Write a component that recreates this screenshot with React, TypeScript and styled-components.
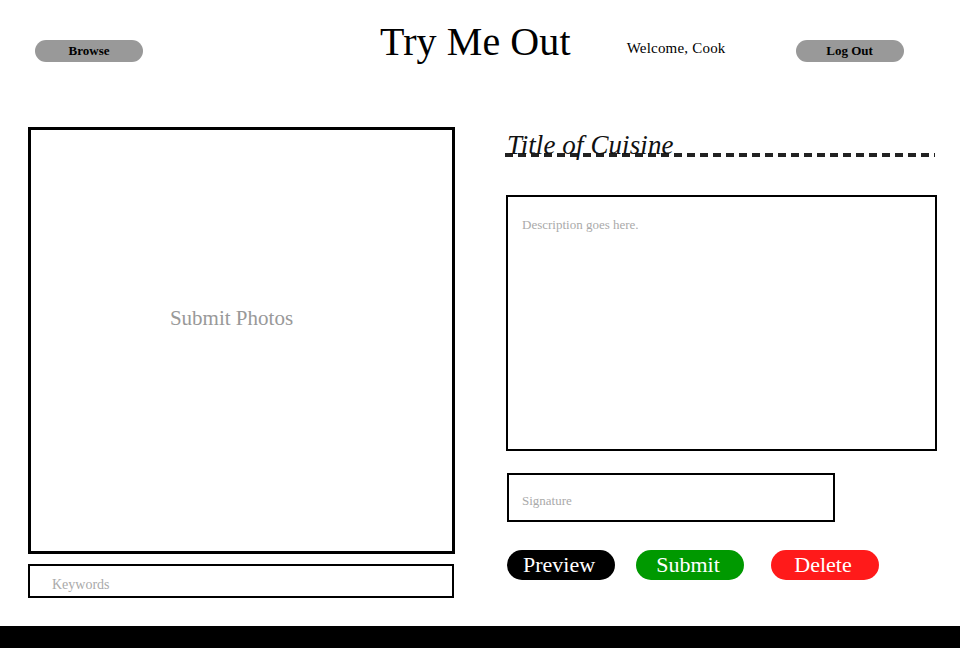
import styled, { createGlobalStyle } from "styled-components";

const GlobalStyle = createGlobalStyle`
  html, body {
    margin: 0;
    padding: 0;
    background: #ffffff;
  }
  body {
    font-family: "Liberation Serif", "DejaVu Serif", serif;
    color: #000000;
  }
`;

const Page = styled.div`
  width: 960px;
  height: 648px;
  display: flex;
  flex-direction: column;
  overflow: hidden;
`;

const Header = styled.header`
  display: flex;
  align-items: baseline;
  padding: 22px 0 0 35px;
  height: 127px;
  box-sizing: border-box;
  flex-shrink: 0;
`;

const PillButton = styled.button<{ $offset?: number }>`
  width: 108px;
  height: 22px;
  margin-left: ${(p) => p.$offset ?? 0}px;
  padding: 0;
  border: none;
  border-radius: 11px;
  background: #999999;
  color: #000000;
  font-family: "Liberation Serif", serif;
  font-weight: bold;
  font-size: 13px;
  line-height: 22px;
`;

const SiteTitle = styled.h1`
  margin: 0 0 0 237px;
  font-family: "Liberation Serif", serif;
  font-weight: normal;
  font-size: 40px;
  line-height: 40px;
  letter-spacing: 0.1px;
`;

const Welcome = styled.span`
  margin-left: 56px;
  font-size: 15px;
  line-height: 15px;
  letter-spacing: 0.2px;
  transform: translateY(-2px);
`;

const Main = styled.main`
  flex: 1;
  display: flex;
  gap: 50px;
  padding-left: 28px;
`;

const LeftColumn = styled.section`
  width: 427px;
  display: flex;
  flex-direction: column;
  gap: 10px;
`;

const PhotoBox = styled.div`
  width: 427px;
  height: 427px;
  box-sizing: border-box;
  border: 3px solid #000000;
  display: flex;
  align-items: center;
  justify-content: center;
  padding: 0 20px 45px 0;
  color: #999999;
  font-size: 21px;
`;

const Field = styled.div<{ $width: number; $height: number; $pad?: number }>`
  width: ${(p) => p.$width}px;
  height: ${(p) => p.$height}px;
  box-sizing: border-box;
  border: 2px solid #000000;
  padding: ${(p) => p.$pad ?? 0}px 0 0 ${(p) => (p.$pad !== undefined ? 14 : 22)}px;
  display: flex;
  align-items: ${(p) => (p.$pad !== undefined ? "flex-start" : "center")};
`;

const Keywords = styled(Field)`
  padding-top: 7px;
`;

const Placeholder = styled.span<{ $size?: number }>`
  color: #aaaaaa;
  font-size: ${(p) => p.$size ?? 13}px;
`;

const RightColumn = styled.section`
  width: 432px;
  display: flex;
  flex-direction: column;
`;

const CuisineTitle = styled.h2`
  margin: 0;
  height: 30px;
  width: 430px;
  padding-left: 2px;
  box-sizing: border-box;
  font-family: "Liberation Serif", serif;
  font-style: italic;
  font-weight: normal;
  font-size: 27px;
  line-height: 36px;
  letter-spacing: 0.1px;
  color: #111111;
  background-image: repeating-linear-gradient(
    to right,
    #222222 0 8px,
    transparent 8px 13px
  );
  background-size: 100% 4px;
  background-position: left bottom;
  background-repeat: no-repeat;
  white-space: nowrap;
`;

const Description = styled(Field)`
  margin: 38px 0 0 1px;
`;

const Signature = styled(Field)`
  margin: 22px 0 0 2px;
  padding-top: 6px;
  padding-left: 13px;
`;

const ButtonRow = styled.div`
  display: flex;
  margin: 28px 0 0 2px;
`;

const ActionButton = styled.button<{ $bg: string; $offset?: number }>`
  width: 108px;
  height: 30px;
  margin-left: ${(p) => p.$offset ?? 0}px;
  padding: 0 4px 0 0;
  border: none;
  border-radius: 15px;
  background: ${(p) => p.$bg};
  color: #ffffff;
  font-family: "Liberation Serif", serif;
  font-size: 22px;
  line-height: 30px;
`;

const Footer = styled.footer`
  height: 22px;
  background: #000000;
  flex-shrink: 0;
`;

export default function App() {
  return (
    <Page>
      <GlobalStyle />
      <Header>
        <PillButton>Browse</PillButton>
        <SiteTitle>Try Me Out</SiteTitle>
        <Welcome>Welcome, Cook</Welcome>
        <PillButton $offset={70}>Log Out</PillButton>
      </Header>
      <Main>
        <LeftColumn>
          <PhotoBox>Submit Photos</PhotoBox>
          <Keywords $width={426} $height={34}>
            <Placeholder $size={14}>Keywords</Placeholder>
          </Keywords>
        </LeftColumn>
        <RightColumn>
          <CuisineTitle>Title of Cuisine</CuisineTitle>
          <Description $width={431} $height={256} $pad={20}>
            <Placeholder>Description goes here.</Placeholder>
          </Description>
          <Signature $width={328} $height={49}>
            <Placeholder>Signature</Placeholder>
          </Signature>
          <ButtonRow>
            <ActionButton $bg="#000000">Preview</ActionButton>
            <ActionButton $bg="#009900" $offset={21}>
              Submit
            </ActionButton>
            <ActionButton $bg="#ff1a1a" $offset={27}>
              Delete
            </ActionButton>
          </ButtonRow>
        </RightColumn>
      </Main>
      <Footer />
    </Page>
  );
}
